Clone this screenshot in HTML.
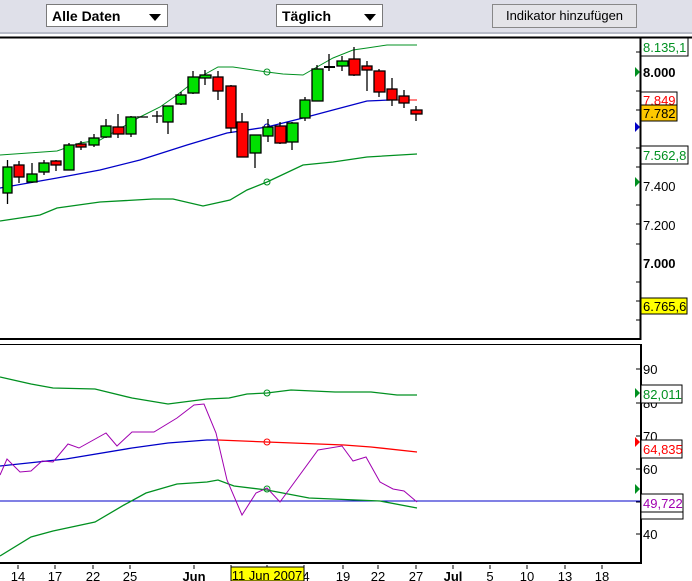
<!DOCTYPE html>
<html><head><meta charset="utf-8"><style>
body{margin:0;width:692px;height:581px;overflow:hidden;background:#fff;font-family:"Liberation Sans",sans-serif;}
.tb{position:absolute;left:0;top:0;width:692px;height:32px;background:#dfe0e9;border-bottom:2px solid #b8bcc8;}
.dd{position:absolute;top:4px;height:23px;background:#fff;border:1px solid #7a7a7a;font-size:14px;font-weight:bold;line-height:23px;padding-left:5px;box-sizing:border-box;}
.dd span{position:absolute;right:6px;top:9px;width:0;height:0;border-left:6px solid transparent;border-right:6px solid transparent;border-top:7px solid #000;}
.bt{position:absolute;left:492px;top:4px;width:145px;height:24px;background:#e4e4e8;border:1px solid #888;box-sizing:border-box;font-size:13px;text-align:center;line-height:22px;}
svg{position:absolute;left:0;top:0}
</style></head><body>
<div class="tb"></div>
<div class="dd" style="left:46px;width:122px">Alle Daten<span></span></div>
<div class="dd" style="left:276px;width:107px">Täglich<span></span></div>
<div class="bt">Indikator hinzufügen</div>
<svg width="692" height="581" font-family="Liberation Sans, sans-serif">
<line x1="0" y1="37.5" x2="692" y2="37.5" stroke="#000" stroke-width="2"/>
<line x1="640.5" y1="37" x2="640.5" y2="340" stroke="#000" stroke-width="2"/>
<line x1="0" y1="339" x2="641" y2="339" stroke="#000" stroke-width="2"/>
<line x1="0" y1="344.5" x2="641" y2="344.5" stroke="#000"/>
<line x1="641" y1="344" x2="641" y2="564" stroke="#000" stroke-width="2"/>
<line x1="0" y1="563" x2="642" y2="563" stroke="#000" stroke-width="2"/>
<g stroke="#000">
<line x1="636" y1="52" x2="640" y2="52"/><line x1="636" y1="91" x2="640" y2="91"/><line x1="636" y1="110" x2="640" y2="110"/><line x1="636" y1="148" x2="640" y2="148"/><line x1="636" y1="167" x2="640" y2="167"/><line x1="636" y1="205" x2="640" y2="205"/><line x1="636" y1="224" x2="640" y2="224"/><line x1="636" y1="244" x2="640" y2="244"/><line x1="636" y1="282" x2="640" y2="282"/><line x1="636" y1="301" x2="640" y2="301"/><line x1="636" y1="320" x2="640" y2="320"/>
<line x1="636" y1="369" x2="641" y2="369"/><line x1="636" y1="403" x2="641" y2="403"/><line x1="636" y1="436" x2="641" y2="436"/><line x1="636" y1="469" x2="641" y2="469"/><line x1="636" y1="502" x2="641" y2="502"/><line x1="636" y1="534" x2="641" y2="534"/>
</g>
<!-- upper bands -->
<polyline fill="none" stroke="#009020" points="0,155 57,151 80,143 100,140 140,117 160,107 177,95 200,77 218,67 233,67 267,72 283,74 303,75 317,67 333,58 353,50 367,48 387,45 417,45"/>
<polyline fill="none" stroke="#0000c8" stroke-width="1.3" points="0,188 57,178 100,170 140,160 187,145 227,133 267,127 303,118 333,110 367,101 390,100"/>
<line x1="390" y1="100" x2="417" y2="100" stroke="#f00"/>
<polyline fill="none" stroke="#009020" stroke-width="1.3" points="0,221 40,215 57,208 100,202 153,199 173,199 203,206 230,200 247,190 267,182 303,165 333,162 367,157 417,154"/>
<circle cx="267" cy="72" r="3" fill="none" stroke="#009020"/>
<circle cx="267" cy="127" r="3" fill="none" stroke="#0000c8"/>
<circle cx="267" cy="182" r="3" fill="none" stroke="#009020"/>
<!-- candles -->
<g stroke="#000" stroke-width="1.3">
<line x1="7.5" y1="160" x2="7.5" y2="204"/><rect x="3" y="167" width="9" height="26" fill="#00e000"/>
<line x1="19" y1="161" x2="19" y2="183"/><rect x="14" y="165" width="10" height="12" fill="#f00"/>
<line x1="32" y1="163" x2="32" y2="183"/><rect x="27" y="174" width="10" height="8" fill="#00e000"/>
<line x1="44" y1="160" x2="44" y2="175"/><rect x="39" y="163" width="10" height="9" fill="#00e000"/>
<line x1="56" y1="160" x2="56" y2="171"/><rect x="51" y="161" width="10" height="4" fill="#f00"/>
<line x1="69" y1="143" x2="69" y2="170"/><rect x="64" y="145" width="10" height="25" fill="#00e000"/>
<line x1="81" y1="141" x2="81" y2="150"/><rect x="76" y="144" width="10" height="3" fill="#f00"/>
<line x1="94" y1="134" x2="94" y2="147"/><rect x="89" y="138" width="10" height="7" fill="#00e000"/>
<line x1="106" y1="119" x2="106" y2="138"/><rect x="101" y="126" width="10" height="11" fill="#00e000"/>
<line x1="118" y1="114" x2="118" y2="138"/><rect x="113" y="127" width="11" height="7" fill="#f00"/>
<line x1="131" y1="116" x2="131" y2="137"/><rect x="126" y="117" width="10" height="17" fill="#00e000"/>
<line x1="137" y1="117" x2="148" y2="117"/>
<line x1="157" y1="111" x2="157" y2="123"/><line x1="152" y1="116" x2="162" y2="116"/>
<line x1="168" y1="106" x2="168" y2="134"/><rect x="163" y="106" width="10" height="16" fill="#00e000"/>
<line x1="181" y1="92" x2="181" y2="105"/><rect x="176" y="95" width="10" height="9" fill="#00e000"/>
<line x1="193" y1="71" x2="193" y2="94"/><rect x="188" y="77" width="11" height="16" fill="#00e000"/>
<line x1="205" y1="70" x2="205" y2="85"/><rect x="200" y="75" width="11" height="3" fill="#00e000"/>
<line x1="218" y1="71" x2="218" y2="100"/><rect x="213" y="77" width="10" height="14" fill="#f00"/>
<line x1="231" y1="85" x2="231" y2="133"/><rect x="226" y="86" width="10" height="42" fill="#f00"/>
<line x1="242" y1="113" x2="242" y2="157"/><rect x="237" y="122" width="11" height="35" fill="#f00"/>
<line x1="255" y1="135" x2="255" y2="168"/><rect x="250" y="135" width="11" height="18" fill="#00e000"/>
<line x1="268" y1="119" x2="268" y2="142"/><rect x="263" y="127" width="10" height="9" fill="#00e000"/>
<line x1="280" y1="122" x2="280" y2="144"/><rect x="275" y="126" width="11" height="17" fill="#f00"/>
<line x1="292" y1="122" x2="292" y2="150"/><rect x="287" y="123" width="11" height="19" fill="#00e000"/>
<line x1="305" y1="97" x2="305" y2="121"/><rect x="300" y="100" width="10" height="18" fill="#00e000"/>
<line x1="317" y1="65" x2="317" y2="101"/><rect x="312" y="69" width="11" height="32" fill="#00e000"/>
<line x1="329" y1="54" x2="329" y2="71"/><line x1="324" y1="67" x2="335" y2="67" stroke-width="2"/>
<line x1="342" y1="56" x2="342" y2="71"/><rect x="337" y="61" width="11" height="5" fill="#00e000"/>
<line x1="354" y1="47" x2="354" y2="76"/><rect x="349" y="59" width="11" height="16" fill="#f00"/>
<line x1="367" y1="61" x2="367" y2="91"/><rect x="362" y="66" width="10" height="4" fill="#f00"/>
<line x1="379" y1="69" x2="379" y2="97"/><rect x="374" y="71" width="11" height="21" fill="#f00"/>
<line x1="392" y1="78" x2="392" y2="106"/><rect x="387" y="89" width="10" height="11" fill="#f00"/>
<line x1="404" y1="90" x2="404" y2="108"/><rect x="399" y="96" width="10" height="7" fill="#f00"/>
<line x1="416" y1="106" x2="416" y2="121"/><rect x="411" y="110" width="11" height="4" fill="#f00"/>
</g>
<!-- upper axis labels -->
<g font-size="13">
<rect x="641" y="38" width="47" height="18" fill="#fff" stroke="#000"/><text x="643" y="52" fill="#009020">8.135,1</text>
<text x="643" y="77" font-weight="bold">8.000</text>
<rect x="641" y="92" width="36" height="16" fill="#fff" stroke="#000"/><text x="643" y="105" fill="#f00">7.849</text>
<rect x="641" y="105" width="36" height="16" fill="#ffc800" stroke="#000"/><text x="643" y="118">7.782</text>
<rect x="641" y="146" width="47" height="18" fill="#fff" stroke="#000"/><text x="643" y="160" fill="#009020">7.562,8</text>
<text x="643" y="191">7.400</text>
<text x="643" y="230">7.200</text>
<text x="643" y="268" font-weight="bold">7.000</text>
<rect x="641" y="298" width="46" height="16" fill="#ffff00" stroke="#000"/><text x="643" y="311">6.765,6</text>
</g>
<polygon points="635,67 640,72 635,77" fill="#009020"/>
<polygon points="635,122 640,127 635,132" fill="#0000c8"/>
<polygon points="635,177 640,182 635,187" fill="#009020"/>
<!-- lower panel -->
<line x1="0" y1="501" x2="640" y2="501" stroke="#0000c8"/>
<polyline fill="none" stroke="#009020" stroke-width="1.3" points="0,377 31,384 53,388 95,389 132,398 168,404 207,399 229,398 247,394 267,393 291,390 335,392 371,392 397,395 417,395"/>
<polyline fill="none" stroke="#0000c8" stroke-width="1.3" points="0,466 66,459 132,448 168,443 207,440 218,440"/>
<polyline fill="none" stroke="#f00" stroke-width="1.3" points="218,440 267,442 344,445 371,447 417,452"/>
<polyline fill="none" stroke="#009020" stroke-width="1.3" points="0,556 31,537 53,531 95,522 124,505 146,493 177,484 207,482 218,480 234,486 267,490 309,498 380,501 417,508"/>
<polyline fill="none" stroke="#a000b0" points="0,475 7,459 20,472 31,471 42,461 53,462 68,444 79,448 106,433 117,446 132,432 154,432 177,418 194,405 204,404 216,433 227,480 242,515 256,493 267,488 280,502 318,450 342,446 353,461 366,457 380,482 393,489 404,491 417,502"/>
<circle cx="267" cy="393" r="3" fill="none" stroke="#009020"/>
<circle cx="267" cy="442" r="3" fill="none" stroke="#f00"/>
<circle cx="267" cy="489" r="3" fill="none" stroke="#009020"/>
<g font-size="13">
<text x="643" y="374">90</text><text x="643" y="408">80</text><text x="643" y="441">70</text><text x="643" y="474">60</text><text x="643" y="539">40</text>
<rect x="641" y="512" width="42" height="7" fill="#fff" stroke="#000"/>
<rect x="641" y="385" width="41" height="18" fill="#fff" stroke="#000"/><text x="643" y="399" fill="#009020">82,011</text>
<rect x="641" y="440" width="41" height="18" fill="#fff" stroke="#000"/><text x="643" y="454" fill="#f00">64,835</text>
<rect x="641" y="494" width="42" height="18" fill="#fff" stroke="#000"/><text x="643" y="508" fill="#a000b0">49,722</text>
</g>
<polygon points="635,388 640,393 635,398" fill="#009020"/>
<polygon points="635,437 640,442 635,447" fill="#f00"/>
<polygon points="635,484 640,489 635,494" fill="#009020"/>
<!-- x axis -->
<g stroke="#000">
<line x1="18" y1="565" x2="18" y2="569"/><line x1="55" y1="565" x2="55" y2="569"/><line x1="93" y1="565" x2="93" y2="569"/><line x1="130" y1="565" x2="130" y2="569"/><line x1="194" y1="565" x2="194" y2="569"/><line x1="231" y1="565" x2="231" y2="569"/><line x1="267" y1="565" x2="267" y2="569"/><line x1="304" y1="565" x2="304" y2="569"/><line x1="343" y1="565" x2="343" y2="569"/><line x1="378" y1="565" x2="378" y2="569"/><line x1="416" y1="565" x2="416" y2="569"/><line x1="453" y1="565" x2="453" y2="569"/><line x1="490" y1="565" x2="490" y2="569"/><line x1="527" y1="565" x2="527" y2="569"/><line x1="565" y1="565" x2="565" y2="569"/><line x1="602" y1="565" x2="602" y2="569"/>
</g>
<g font-size="13" text-anchor="middle">
<text x="18" y="581">14</text><text x="55" y="581">17</text><text x="93" y="581">22</text><text x="130" y="581">25</text><text x="194" y="581" font-weight="bold">Jun</text><text x="306" y="581">4</text><text x="343" y="581">19</text><text x="378" y="581">22</text><text x="416" y="581">27</text><text x="453" y="581" font-weight="bold">Jul</text><text x="490" y="581">5</text><text x="527" y="581">10</text><text x="565" y="581">13</text><text x="602" y="581">18</text>
</g>
<rect x="231" y="567" width="73" height="14" fill="#ffff00" stroke="#000"/>
<text x="267" y="580" font-size="13" text-anchor="middle">11 Jun 2007</text>
</svg>
</body></html>
